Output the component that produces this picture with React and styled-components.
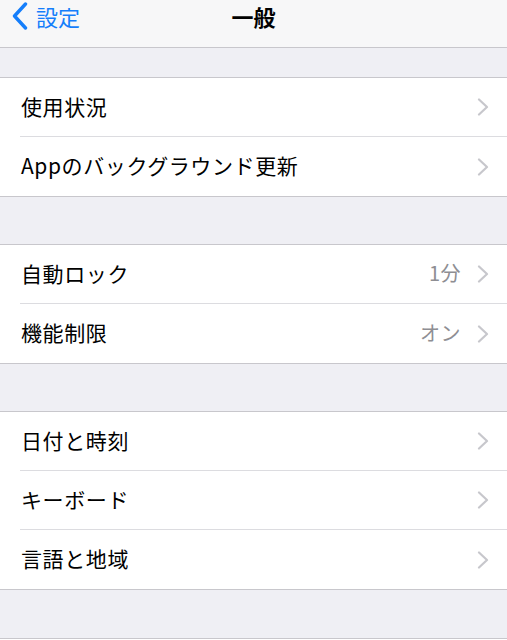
import React from "react";
import styled, { createGlobalStyle } from "styled-components";

const Global = createGlobalStyle`
  html, body { margin: 0; padding: 0; background: #efeff4; }
  body { font-family: "Noto Sans CJK JP", "Noto Sans", sans-serif; -webkit-font-smoothing: antialiased; }
`;

const Page = styled.div`
  width: 507px;
  height: 640px;
  background: #efeff4;
  overflow: hidden;
`;

const NavBar = styled.div`
  height: 47px;
  background: #f7f7f8;
  border-bottom: 1px solid #c8c7cc;
  display: grid;
  grid-template-columns: 1fr auto 1fr;
  align-items: center;
`;

const Back = styled.div`
  display: flex;
  align-items: center;
  gap: 8px;
  padding-left: 12px;
  color: #157efb;
  font-size: 22px;
  height: 47px;
  margin-top: -15px;
`;

const Title = styled.div`
  font-size: 22px;
  font-weight: 700;
  color: #000;
  margin-top: -15px;
`;

const Gap = styled.div`
  height: ${(p) => p.h}px;
`;

const Section = styled.div`
  background: #fff;
  border-top: 1px solid #c8c7cc;
  border-bottom: 1px solid #c8c7cc;
`;

const Row = styled.div`
  height: 59px;
  box-sizing: border-box;
  display: flex;
  align-items: center;
  padding-left: 21px;
  padding-bottom: 3px;
  &:not(:last-child) {
    border-bottom: 1px solid #dcdce0;
    margin-left: 20px;
    padding-left: 1px;
  }
`;

const Label = styled.div`
  flex: 1;
  font-size: 21px;
  color: #000;
  letter-spacing: 0.6px;
`;

const Value = styled.div`
  font-size: 20px;
  color: #8e8e93;
  margin-right: 16px;
  letter-spacing: 0.5px;
`;

const Chevron = styled.svg`
  width: 12px;
  height: 18px;
  margin-right: 18px;
  margin-top: 3px;
`;

const Arrow = () => (
  <Chevron viewBox="0 0 12 18">
    <path d="M2 1.5 L10 9 L2 16.5" fill="none" stroke="#c7c7cc" strokeWidth="2.2" strokeLinecap="round" strokeLinejoin="round" />
  </Chevron>
);

const sections = [
  [{ l: "使用状況" }, { l: "Appのバックグラウンド更新" }],
  [{ l: "自動ロック", v: "1分" }, { l: "機能制限", v: "オン" }],
  [{ l: "日付と時刻" }, { l: "キーボード" }, { l: "言語と地域" }],
];

export default function App() {
  return (
    <Page>
      <Global />
      <NavBar>
        <Back>
          <svg width="16" height="28" viewBox="0 0 16 28">
            <path d="M13.5 2 L2.5 14 L13.5 26" fill="none" stroke="#157efb" strokeWidth="3.4" strokeLinecap="round" strokeLinejoin="round" />
          </svg>
          <span>設定</span>
        </Back>
        <Title>一般</Title>
        <div />
      </NavBar>
      {sections.map((s, i) => (
        <React.Fragment key={i}>
          <Gap h={i === 0 ? 29 : 47} />
          <Section>
            {s.map((r) => (
              <Row key={r.l}>
                <Label>{r.l}</Label>
                {r.v && <Value>{r.v}</Value>}
                <Arrow />
              </Row>
            ))}
          </Section>
        </React.Fragment>
      ))}
      <Gap h={48} />
      <Section style={{ borderBottom: "none", height: 10 }} />
    </Page>
  );
}
